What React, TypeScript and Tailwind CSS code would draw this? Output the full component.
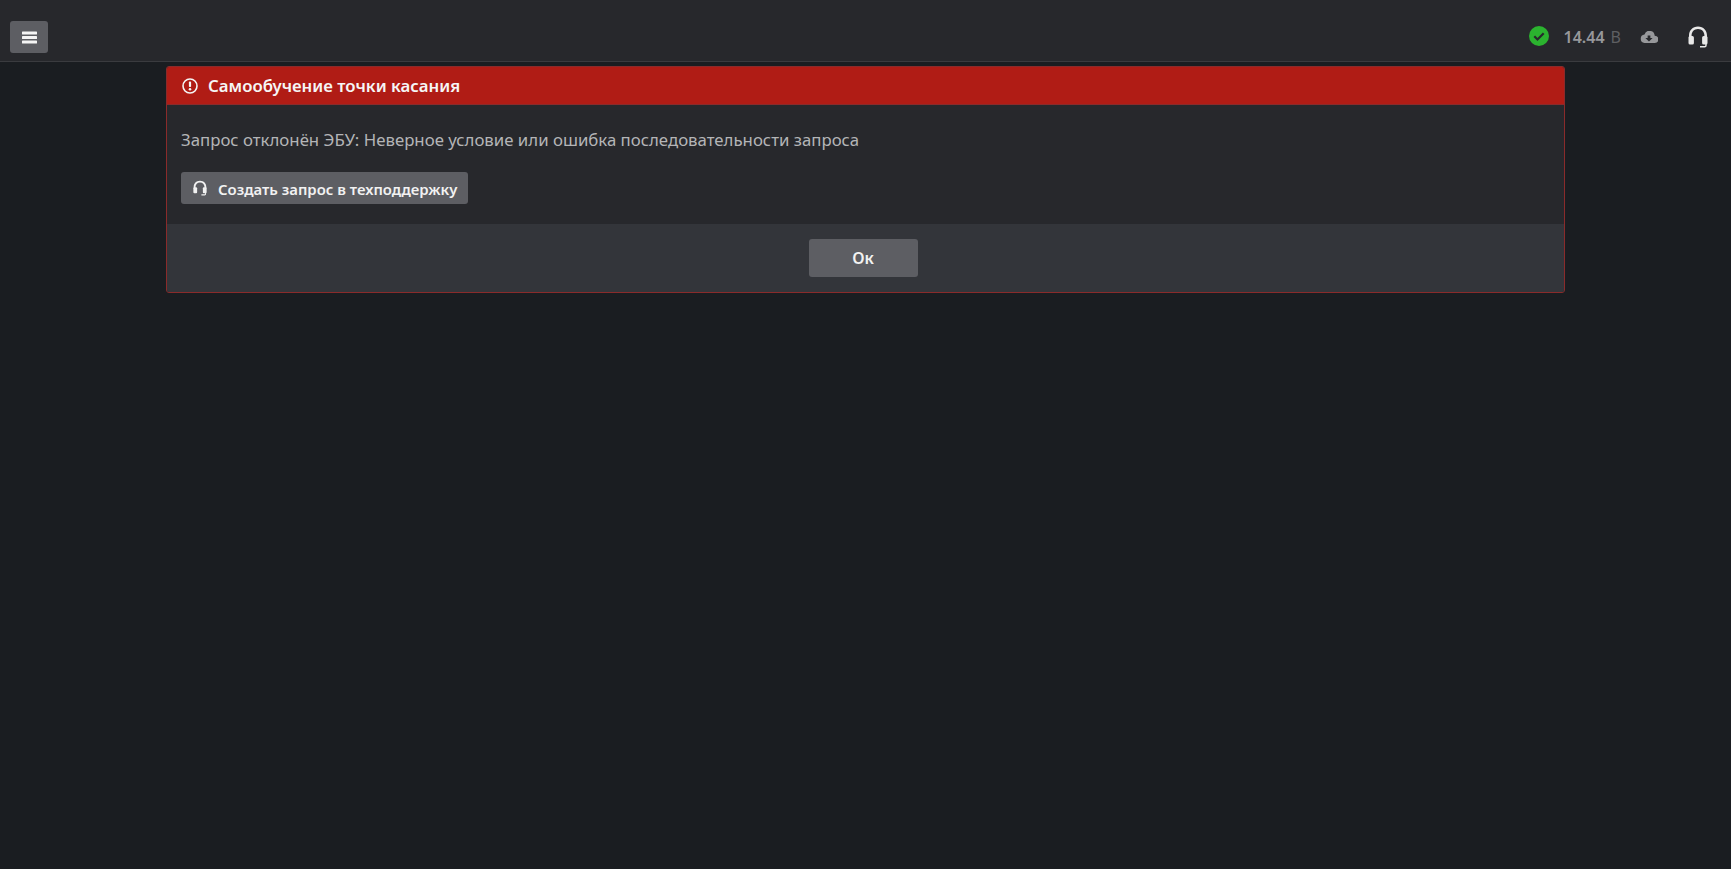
import React from "react";

const Headset = ({ className }: { className?: string }) => (
  <svg viewBox="0 0 20 22" className={className} fill="currentColor">
    <path d="M10 .5C4.500.500 1 4.500 1 9.500V11h2.600V9.500C3.600 5.900 6.200 3.100 10 3.100s6.400 2.800 6.400 6.400V11H19V9.500C19 4.500 15.500.500 10 .500z" />
    <rect x="0.500" y="10" width="5.400" height="8.500" rx="1.500" />
    <rect x="14.100" y="10" width="5.400" height="8.500" rx="1.500" />
    <path d="M17.300 18v1.200c0 .5-.4.900-.9.900h-4.400v1.500h4.700c1.100 0 2-.9 2-2V18z" />
  </svg>
);

export default function App() {
  return (
    <div className="min-h-[869px] bg-[#1a1d21] flex flex-col font-['Noto_Sans','Open_Sans',sans-serif]">
      <header className="h-[62px] shrink-0 bg-[#27282c] border-b border-[#3a3b3f] flex items-center justify-between pl-[10px] pr-[24px]">
        <button className="w-[38px] h-[32px] mt-[13px] rounded-[3px] bg-[#5d5e63] flex items-center justify-center">
          <svg viewBox="0 0 15 13" className="w-[15px] h-[13px]" fill="#f5f5f5">
            <rect x="0" y="0.500" width="15" height="3" rx="0.600" />
            <rect x="0" y="5" width="15" height="3" rx="0.600" />
            <rect x="0" y="9.500" width="15" height="3" rx="0.600" />
          </svg>
        </button>
        <div className="flex items-center mt-[13px]">
          <svg viewBox="0 0 20 20" className="w-[20px] h-[20px] mr-[15px] -mt-[2px]">
            <circle cx="10" cy="10" r="10" fill="#2bb32f" />
            <path d="M5.300 10.300l3.200 3.200 6.200-6.300" fill="none" stroke="#27282c" strokeWidth="2.200" />
          </svg>
          <span className="text-[16px] leading-[24px] font-semibold text-[#97989b]">14.44</span>
          <span className="text-[16px] leading-[24px] text-[#5e5f62] ml-[6px]">В</span>
          <svg viewBox="0 0 24 16" className="w-[18px] h-[12px] ml-[19px]" fill="#97989b">
            <path d="M19.600 6.200A7 7 0 0 0 6 4.500 5.800 5.800 0 0 0 6 16h13.500a4.900 4.900 0 0 0 .1-9.800zM12 14l-4.800-4.800h3V6h3.600v3.200h3z" />
          </svg>
          <Headset className="w-[20px] h-[22px] ml-[30px] -mr-[1px] text-[#e8e8e8]" />
        </div>
      </header>

      <section className="mx-[166px] mt-[4px] w-[1399px] rounded-[3px] border border-[#8a2b2b] bg-[#27282c] overflow-hidden">
        <div className="h-[38px] bg-[#b01c15] border-b border-[#8a2b2b] flex items-center pl-[15px]">
          <svg viewBox="0 0 16 16" className="w-[16px] h-[16px] mr-[10px]" fill="none">
            <circle cx="8" cy="8" r="7" stroke="#f5f5f5" strokeWidth="1.600" />
            <rect x="6.900" y="3.600" width="2.200" height="5.400" rx="0.800" fill="#f5f5f5" />
            <circle cx="8" cy="11.200" r="1.250" fill="#f5f5f5" />
          </svg>
          <h1 className="text-[16.800px] leading-[24px] font-semibold text-[#f6f6f6]">Самообучение точки касания</h1>
        </div>
        <div className="h-[119px] px-[14px] pt-[23px]">
          <p className="text-[16.800px] leading-[24px] text-[#b4b5b7]">
            Запрос отклонён ЭБУ: Неверное условие или ошибка последовательности запроса
          </p>
          <button className="mt-[20px] h-[32px] w-[287px] rounded-[3px] bg-[#5d5e63] flex items-center pl-[12px] text-white">
            <Headset className="w-[14px] h-[16px] text-[#f2f2f2] mr-[11px]" />
            <span className="mt-[1px] text-[14.900px] leading-[22px] font-semibold text-[#f2f2f2]">Создать запрос в техподдержку</span>
          </button>
        </div>
        <div className="h-[68px] bg-[#33353a] flex items-center justify-center">
          <button className="w-[109px] h-[38px] mr-[5px] rounded-[3px] bg-[#5d5e63] text-[16px] font-semibold text-[#f2f2f2]">
            Ок
          </button>
        </div>
      </section>
    </div>
  );
}
